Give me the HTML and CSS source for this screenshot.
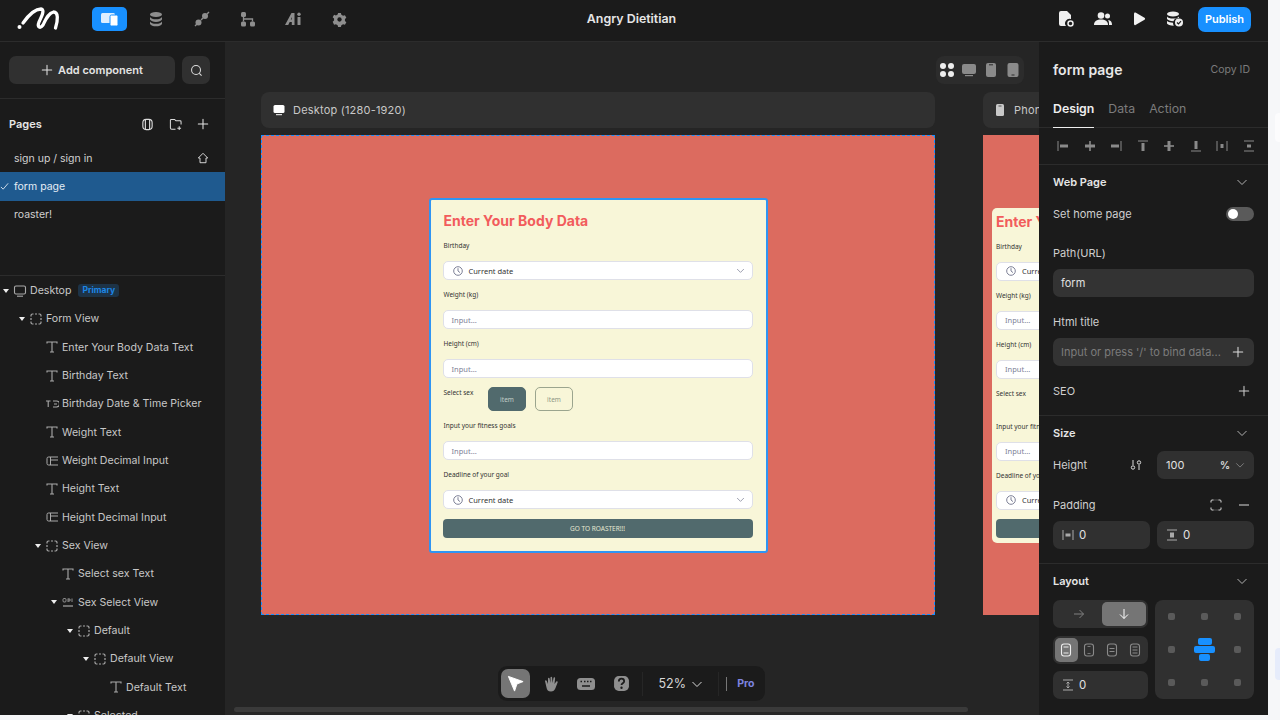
FILE: index.html
```html
<!DOCTYPE html>
<html lang="en">
<head>
  <meta charset="UTF-8" />
  <title>Angry Dietitian</title>
  <link rel="stylesheet" href="styles.css">
</head>
<body>
  <svg class="sprite" aria-hidden="true">
    <symbol id="i-text" viewBox="0 0 14 14"><path d="M2 3.5V2h10v1.5M7 2v10M5 12h4" fill="none" stroke="currentColor" stroke-width="1.1"/></symbol>
    <symbol id="i-view" viewBox="0 0 14 14"><path d="M2 4.500V3.500A1.500 1.500 0 0 1 3.500 2h1M6 2h2M9.500 2h1A1.500 1.500 0 0 1 12 3.500v1M12 6v2M12 9.500v1a1.500 1.500 0 0 1-1.500 1.500h-1M8 12H6M4.500 12h-1A1.500 1.500 0 0 1 2 10.500v-1M2 8V6" fill="none" stroke="currentColor" stroke-width="1.200"/></symbol>
    <symbol id="i-input" viewBox="0 0 14 14"><path d="M13 3H3.5A1.5 1.5 0 0 0 2 4.500v5A1.500 1.500 0 0 0 3.500 11H13M5.500 3v8M5.500 6H13" fill="none" stroke="currentColor" stroke-width="1"/></symbol>
    <symbol id="i-picker" viewBox="0 0 14 14"><path d="M1 4h4.500M3.200 4v6M8 4h3.500a2.500 2.500 0 0 1 0 6H8M9 7h3" fill="none" stroke="currentColor" stroke-width="1.1"/></symbol>
    <symbol id="i-select" viewBox="0 0 14 14"><path d="M2 11h10" fill="none" stroke="currentColor" stroke-width="1.200"/><rect x="2" y="3.500" width="3" height="3.500" rx="1" fill="none" stroke="currentColor" stroke-width=".8"/><path d="M7 3.500v3.500M7 4h2v2H7M11 3.500V7" fill="none" stroke="currentColor" stroke-width=".8"/></symbol>
    <symbol id="i-monitor" viewBox="0 0 14 14"><rect x="1.500" y="2" width="11" height="8" rx="1.500" fill="none" stroke="currentColor" stroke-width="1.100"/><path d="M4 12.200h6" stroke="currentColor" stroke-width="1.100"/></symbol>
    <symbol id="i-plus" viewBox="0 0 14 14"><path d="M7 1.500v11M1.500 7h11" fill="none" stroke="currentColor" stroke-width="1.200" stroke-linecap="round"/></symbol>
    <symbol id="i-chevron" viewBox="0 0 12 12"><path d="M1.500 4l4.500 4.500L10.500 4" fill="none" stroke="currentColor" stroke-width="1"/></symbol>
    <symbol id="i-clock" viewBox="0 0 12 12"><circle cx="6" cy="6" r="4.300" fill="none" stroke="currentColor" stroke-width="1"/><path d="M6 3.200V6l2 1.600" fill="none" stroke="currentColor" stroke-width="1"/></symbol>
    <symbol id="i-phone" viewBox="0 0 14 14"><rect x="3" y="1" width="8" height="12" rx="1.500" fill="currentColor"/><path d="M5.500 3h3" stroke="#303030" stroke-width=".8"/></symbol>
    <symbol id="i-wrap-a" viewBox="0 0 14 14"><rect x="2.500" y="1" width="9" height="12" rx="2.500" fill="none" stroke="currentColor" stroke-width="1.100"/><path d="M4.500 4h5M4.500 10h5" stroke="currentColor" stroke-width="1"/></symbol>
    <symbol id="i-wrap-b" viewBox="0 0 14 14"><rect x="2.500" y="1" width="9" height="12" rx="2.500" fill="none" stroke="currentColor" stroke-width="1.100"/><path d="M5.500 3.500h3M5.500 10.500h3" stroke="currentColor" stroke-width=".8"/></symbol>
    <symbol id="i-wrap-c" viewBox="0 0 14 14"><rect x="2.500" y="1" width="9" height="12" rx="2.500" fill="none" stroke="currentColor" stroke-width="1.100"/><path d="M4.500 5.500h5M4.500 8.500h5" stroke="currentColor" stroke-width="1"/></symbol>
    <symbol id="i-wrap-d" viewBox="0 0 14 14"><rect x="2.500" y="1" width="9" height="12" rx="2.500" fill="none" stroke="currentColor" stroke-width="1.100"/><path d="M4.500 4h5M4.500 7h5M4.500 10h5" stroke="currentColor" stroke-width="1"/></symbol>
  </svg>

  <div class="app">
    <header class="topbar">
      <div class="topbar-left">
        <svg class="logo" viewBox="0 0 44 24" width="44" height="24"><circle cx="3.500" cy="20" r="2" fill="#fff"/><path d="M7 16C12 9 18 2 25 2c4 .5 1 7-2 13-2 5 1 7 4 3 3-6 5.500-12 10.500-13 5 0 4.500 8 2 16" fill="none" stroke="#fff" stroke-width="3.300" stroke-linecap="round"/></svg>
        <nav class="main-nav">
          <a class="nav-btn active" href="#"><svg viewBox="0 0 20 16" width="20" height="16"><rect x="1" y="2" width="14" height="10" rx="1.500" fill="#fff" opacity=".85"/><rect x="10" y="4" width="8" height="11" rx="1.500" fill="#fff" stroke="#1890ff"/></svg></a>
          <a class="nav-btn" href="#"><svg viewBox="0 0 16 16" width="16" height="16" fill="currentColor"><ellipse cx="8" cy="3.500" rx="6" ry="2.500"/><path d="M2 6c1 1.500 3 2.300 6 2.300S13 7.500 14 6v2.500C13 10 11 11 8 11S3 10 2 8.500zM2 10.500c1 1.500 3 2.300 6 2.300s5-.8 6-2.300V13c-1 1.500-3 2.300-6 2.300S3 14.500 2 13z"/></svg></a>
          <a class="nav-btn" href="#"><svg viewBox="0 0 16 16" width="16" height="16" fill="currentColor"><circle cx="4.500" cy="11.500" r="3"/><circle cx="11" cy="5" r="3"/><path d="M1 15l2-2M13 3l2-2M7 9l2-2" stroke="currentColor" stroke-width="1.400"/></svg></a>
          <a class="nav-btn" href="#"><svg viewBox="0 0 16 16" width="16" height="16" fill="currentColor"><rect x="1" y="1" width="5" height="5" rx="1.500"/><rect x="1" y="10.500" width="5" height="5" rx="1.500"/><rect x="10" y="10.500" width="5" height="5" rx="1.500"/><path d="M3.500 6v4.500M3.500 8h9v2.500" fill="none" stroke="currentColor" stroke-width="1.300"/></svg></a>
          <a class="nav-btn" href="#"><svg viewBox="0 0 18 16" width="18" height="16" fill="currentColor"><path d="M0 14L6.500 2h3v12H6.800v-3H4.700L3.200 14zM6.800 6L5.800 8.500h1z"/><rect x="12.500" y="6" width="3" height="8" rx=".5"/><circle cx="14" cy="3.200" r="1.700"/></svg></a>
          <a class="nav-btn" href="#"><svg viewBox="0 0 16 16" width="15" height="15"><path d="M6.500 1h3l.5 2 1.800 1 2-.6 1.500 2.600-1.500 1.500v2l1.500 1.500-1.500 2.600-2-.6-1.800 1-.5 2h-3l-.5-2-1.800-1-2 .6L.7 10.500 2.200 9V7L.7 5.500 2.200 3l2 .6 1.800-1z" fill="currentColor"/><circle cx="8" cy="8" r="2.300" fill="#1b1b1b"/></svg></a>
        </nav>
      </div>
      <div class="app-title">Angry Dietitian</div>
      <div class="topbar-right">
        <svg viewBox="0 0 16 18" width="16" height="18"><path d="M1 3a2 2 0 0 1 2-2h6l4 4v4a4.500 4.500 0 0 0-5 7H3a2 2 0 0 1-2-2z" fill="#eee"/><circle cx="12.500" cy="13.500" r="2.500" fill="none" stroke="#eee" stroke-width="1.500"/></svg>
        <svg viewBox="0 0 18 16" width="18" height="16" fill="#eee"><circle cx="7" cy="4.500" r="3.300"/><path d="M0 14c0-4 3-5.500 7-5.500s7 1.500 7 5.500z"/><circle cx="13.500" cy="5" r="2.500"/><path d="M15 14h3c0-3-1-4.500-4-5 1 1 1 3 1 5z"/></svg>
        <svg viewBox="0 0 14 14" width="14" height="14"><path d="M2 1.500c0-1 .8-1.300 1.500-.9l9 5.200c.8.500.8 1.500 0 2l-9 5.200c-.7.400-1.500.1-1.500-.9z" fill="#f2f2f2"/></svg>
        <svg viewBox="0 0 18 16" width="18" height="16" fill="#eee"><ellipse cx="7" cy="3" rx="6" ry="2.500"/><path d="M1 5.500C2 7 4 7.500 7 7.500s5-.5 6-2V7c-3 0-5 1-5.500 3.300C4 10.300 2 9 1 8zM1 10c1.500 1 3.500 1.500 6 1.700 0 1 .2 2 .8 3C4 14.700 1.500 13.500 1 12.500z"/><circle cx="13" cy="11.500" r="4"/><path d="M11 11.500l1.500 1.500 2.500-2.800" fill="none" stroke="#1b1b1b" stroke-width="1.200"/></svg>
        <button class="publish">Publish</button>
      </div>
    </header>

    <div class="workspace">
      <aside class="sidebar">
        <div class="add-row">
          <button class="add-btn"><svg class="icon-12"><use href="#i-plus"/></svg>Add component</button>
          <button class="search-btn"><svg viewBox="0 0 14 14" width="13" height="13"><circle cx="6.500" cy="6.500" r="4.800" fill="none" stroke="currentColor" stroke-width="1.100"/><path d="M10 10l2.500 2.500" stroke="currentColor" stroke-width="1.100"/></svg></button>
        </div>

        <section class="pages">
          <div class="pages-head">
            <span>Pages</span>
            <div class="pages-tools">
              <svg viewBox="0 0 14 14" width="13" height="13"><rect x="2" y="1.500" width="10" height="11" rx="3.500" fill="none" stroke="#ddd" stroke-width="1.200"/><path d="M4.700 2v10M9.300 2v10" stroke="#ddd" stroke-width="1.200"/></svg>
              <svg viewBox="0 0 14 14" width="13" height="13"><path d="M7 12H3a1.500 1.500 0 0 1-1.500-1.500v-8A1 1 0 0 1 2.500 1.500H6L7.500 3H12a1 1 0 0 1 1 1v3" fill="none" stroke="#ddd" stroke-width="1.100"/><path d="M11 9v4M9 11h4" stroke="#ddd" stroke-width="1.100"/></svg>
              <svg class="icon-12"><use href="#i-plus"/></svg>
            </div>
          </div>
          <div class="page-row"><span>sign up / sign in</span><svg viewBox="0 0 14 14" width="12" height="12"><path d="M7 1.500L1.500 7H3.500v5.500h7V7h2z" fill="none" stroke="#ddd" stroke-width="1.100" stroke-linejoin="round"/></svg></div>
          <div class="page-row selected"><svg class="check" viewBox="0 0 10 10" width="9" height="9"><path d="M1 5.500L3.500 8 9 1.500" fill="none" stroke="#dfe8f2" stroke-width="1"/></svg><span>form page</span></div>
          <div class="page-row"><span>roaster!</span></div>
        </section>

        <section class="tree">
          <div class="tree-row lvl-0"><i class="caret"></i><svg class="tree-icon"><use href="#i-monitor"/></svg><span>Desktop</span><em class="tag">Primary</em></div>
          <div class="tree-row lvl-1"><i class="caret"></i><svg class="tree-icon"><use href="#i-view"/></svg><span>Form View</span></div>
          <div class="tree-row lvl-2"><i class="no-caret"></i><svg class="tree-icon"><use href="#i-text"/></svg><span>Enter Your Body Data Text</span></div>
          <div class="tree-row lvl-2"><i class="no-caret"></i><svg class="tree-icon"><use href="#i-text"/></svg><span>Birthday Text</span></div>
          <div class="tree-row lvl-2"><i class="no-caret"></i><svg class="tree-icon"><use href="#i-picker"/></svg><span>Birthday Date &amp; Time Picker</span></div>
          <div class="tree-row lvl-2"><i class="no-caret"></i><svg class="tree-icon"><use href="#i-text"/></svg><span>Weight Text</span></div>
          <div class="tree-row lvl-2"><i class="no-caret"></i><svg class="tree-icon"><use href="#i-input"/></svg><span>Weight Decimal Input</span></div>
          <div class="tree-row lvl-2"><i class="no-caret"></i><svg class="tree-icon"><use href="#i-text"/></svg><span>Height Text</span></div>
          <div class="tree-row lvl-2"><i class="no-caret"></i><svg class="tree-icon"><use href="#i-input"/></svg><span>Height Decimal Input</span></div>
          <div class="tree-row lvl-2"><i class="caret"></i><svg class="tree-icon"><use href="#i-view"/></svg><span>Sex View</span></div>
          <div class="tree-row lvl-3"><i class="no-caret"></i><svg class="tree-icon"><use href="#i-text"/></svg><span>Select sex Text</span></div>
          <div class="tree-row lvl-3"><i class="caret"></i><svg class="tree-icon"><use href="#i-select"/></svg><span>Sex Select View</span></div>
          <div class="tree-row lvl-4"><i class="caret"></i><svg class="tree-icon"><use href="#i-view"/></svg><span>Default</span></div>
          <div class="tree-row lvl-5"><i class="caret"></i><svg class="tree-icon"><use href="#i-view"/></svg><span>Default View</span></div>
          <div class="tree-row lvl-6"><i class="no-caret"></i><svg class="tree-icon"><use href="#i-text"/></svg><span>Default Text</span></div>
          <div class="tree-row lvl-4"><i class="caret"></i><svg class="tree-icon"><use href="#i-view"/></svg><span>Selected</span></div>
        </section>
      </aside>

      <main class="canvas">
        <div class="device-switch">
          <svg viewBox="0 0 16 16" width="16" height="16" fill="#eee"><circle cx="4" cy="4" r="3"/><circle cx="12" cy="4" r="3"/><circle cx="4" cy="12" r="3"/><circle cx="12" cy="12" r="3"/></svg>
          <svg viewBox="0 0 16 16" width="16" height="16" fill="#8a8a8a"><rect x="1" y="2" width="14" height="10" rx="2"/><rect x="4" y="13" width="8" height="1.200"/></svg>
          <svg viewBox="0 0 16 16" width="16" height="16" fill="#8a8a8a"><rect x="3" y="1" width="10" height="14" rx="2"/><rect x="6" y="2.300" width="4" height="1" fill="#2c2c2c"/></svg>
          <svg viewBox="0 0 16 16" width="16" height="16" fill="#8a8a8a"><rect x="2.500" y="1" width="11" height="14" rx="2"/><rect x="6.500" y="12.500" width="3" height="1" fill="#2c2c2c"/></svg>
        </div>

        <div class="device-bar desktop-bar"><svg viewBox="0 0 14 14" width="14" height="14"><rect x="1.500" y="2" width="11" height="8" rx="1.500" fill="#fff"/><path d="M4 11.700h6" stroke="#fff"/></svg><span>Desktop (1280-1920)</span></div>
        <div class="device-bar phone-bar"><svg class="icon-14"><use href="#i-phone"/></svg><span>Phone</span></div>

        <div class="frame desktop-frame">
          <form class="body-form">
            <h2>Enter Your Body Data</h2>
            <label>Birthday</label>
            <div class="field picker"><svg class="icon-12"><use href="#i-clock"/></svg><span>Current date</span><svg class="push"><use href="#i-chevron"/></svg></div>
            <label>Weight (kg)</label>
            <div class="field">Input...</div>
            <label>Height (cm)</label>
            <div class="field">Input...</div>
            <div class="sex-row">
              <span>Select sex</span>
              <button type="button" class="sex-item on">item</button>
              <button type="button" class="sex-item">item</button>
            </div>
            <label>Input your fitness goals</label>
            <div class="field">Input...</div>
            <label>Deadline of your goal</label>
            <div class="field picker"><svg class="icon-12"><use href="#i-clock"/></svg><span>Current date</span><svg class="push"><use href="#i-chevron"/></svg></div>
            <button type="button" class="go-btn">GO TO ROASTER!!!</button>
          </form>
        </div>

        <div class="frame phone-frame">
          <form class="body-form phone-form">
            <h2>Enter Your Body Data</h2>
            <label>Birthday</label>
            <div class="field picker"><svg class="icon-12"><use href="#i-clock"/></svg><span>Current date</span><svg class="push"><use href="#i-chevron"/></svg></div>
            <label>Weight (kg)</label>
            <div class="field">Input...</div>
            <label>Height (cm)</label>
            <div class="field">Input...</div>
            <div class="sex-row"><span>Select sex</span></div>
            <label>Input your fitness goals</label>
            <div class="field">Input...</div>
            <label>Deadline of your goal</label>
            <div class="field picker"><svg class="icon-12"><use href="#i-clock"/></svg><span>Current date</span><svg class="push"><use href="#i-chevron"/></svg></div>
            <button type="button" class="go-btn">GO TO ROASTER!!!</button>
          </form>
        </div>

        <div class="toolbar">
          <button class="tool active"><svg viewBox="0 0 20 20" width="19" height="19"><path d="M2.500 2.500L18 8l-6.500 2.500L9 18z" fill="#fff" stroke="#fff" stroke-linejoin="round"/></svg></button>
          <button class="tool"><svg viewBox="0 0 18 18" width="18" height="18" fill="#8f8f8f"><path d="M3 6c0-1 1.500-1 1.800 0L6 9V3.500c0-1 1.500-1 1.600 0L8.500 8V2.500c0-1 1.600-1 1.600 0L10.500 8l1-5c.2-1 1.700-.8 1.600.3L12.500 9l1.800-2.500c.6-.8 1.800 0 1.300 1L13.500 13c-.8 2.500-2.500 3.500-4.500 3.500-3 0-4-1.500-4.500-4z"/></svg></button>
          <button class="tool"><svg viewBox="0 0 20 14" width="20" height="14"><rect x="1" y="1" width="18" height="12" rx="3.500" fill="#8f8f8f"/><path d="M4.500 4.500h1.500M8 4.500h1.500M11 4.500h1.500M14 4.500h1.500M6 9h8" stroke="#1b1b1b" stroke-width="1.300"/></svg></button>
          <button class="tool"><svg viewBox="0 0 16 16" width="17" height="17"><rect x="1" y="1" width="14" height="14" rx="4.500" fill="#8f8f8f"/><path d="M5.500 6c0-3.500 5-3.300 5-.2 0 2-2.500 2-2.500 3.700" fill="none" stroke="#1b1b1b" stroke-width="1.700"/><circle cx="8" cy="12" r="1.100" fill="#1b1b1b"/></svg></button>
          <i class="tool-sep"></i>
          <div class="zoom-val">52%<svg class="icon-12"><use href="#i-chevron"/></svg></div>
          <i class="tool-sep"></i>
          <i class="pro-bar"></i>
          <span class="pro">Pro</span>
        </div>

        <div class="h-scroll"></div>
      </main>

      <aside class="panel">
        <div class="panel-title"><h3>form page</h3><span>Copy ID</span></div>
        <div class="tabs"><span class="on">Design</span><span>Data</span><span>Action</span></div>
        <div class="align-row">
          <svg viewBox="0 0 12 12"><path d="M1 1v10" stroke-width="1"/><path d="M3 4.500h8v3H3z" class="solid"/></svg>
          <svg viewBox="0 0 12 12"><path d="M6 1v10" stroke-width="1.600"/><path d="M1 4.500h10v3H1z" class="solid"/></svg>
          <svg viewBox="0 0 12 12"><path d="M11 1v10" stroke-width="1"/><path d="M1 4.500h8v3H1z" class="solid"/></svg>
          <svg viewBox="0 0 12 12"><path d="M1 1h10" stroke-width="1"/><path d="M4.500 3h3v8h-3z" class="solid"/></svg>
          <svg viewBox="0 0 12 12"><path d="M1 6h10" stroke-width="1.600"/><path d="M4.500 1h3v10h-3z" class="solid"/></svg>
          <svg viewBox="0 0 12 12"><path d="M1 11h10" stroke-width="1"/><path d="M4.500 1h3v8h-3z" class="solid"/></svg>
          <svg viewBox="0 0 12 12"><path d="M1 1v10M11 1v10" stroke-width="1"/><path d="M4.500 4h3v4h-3z" class="solid"/></svg>
          <svg viewBox="0 0 12 12"><path d="M1 1h10M1 11h10" stroke-width="1"/><path d="M4 4.500h4v3H4z" class="solid"/></svg>
        </div>

        <section class="panel-sec web-sec">
          <div class="sec-head"><b>Web Page</b><svg class="icon-12"><use href="#i-chevron"/></svg></div>
          <div class="prop-row"><span>Set home page</span><i class="toggle"></i></div>
          <div class="prop-label">Path(URL)</div>
          <div class="prop-input">form</div>
          <div class="prop-label">Html title</div>
          <div class="prop-input placeholder"><span>Input or press '/' to bind data...</span><svg class="icon-12"><use href="#i-plus"/></svg></div>
          <div class="prop-row seo-row"><span>SEO</span><svg class="icon-12"><use href="#i-plus"/></svg></div>
        </section>

        <section class="panel-sec size-sec">
          <div class="sec-head"><b>Size</b><svg class="icon-12"><use href="#i-chevron"/></svg></div>
          <div class="height-row">
            <span>Height</span>
            <svg class="sliders" viewBox="0 0 12 12" width="12" height="12"><path d="M3 1v5M9 6v5" stroke="#ddd"/><circle cx="3" cy="8.500" r="1.700" fill="none" stroke="#ddd"/><circle cx="9" cy="3.500" r="1.700" fill="none" stroke="#ddd"/></svg>
            <div class="unit-input"><span>100</span><b>%</b><svg class="icon-12"><use href="#i-chevron"/></svg></div>
          </div>
          <div class="prop-row padding-row"><span>Padding</span>
            <div class="padding-tools">
              <svg viewBox="0 0 12 12" width="12" height="12"><path d="M1 3.500V2a1 1 0 0 1 1-1h1.500M8.500 1H10a1 1 0 0 1 1 1v1.500M11 8.500V10a1 1 0 0 1-1 1H8.500M3.500 11H2a1 1 0 0 1-1-1V8.500" fill="none" stroke="#ddd"/><path d="M2.500 1h7M2.500 11h7" stroke="#777" stroke-width=".6"/></svg>
              <svg class="icon-12"><path d="M1 6h10" stroke="#bbb" stroke-width="1.200"/></svg>
            </div>
          </div>
          <div class="two-inputs">
            <div class="num-input"><svg viewBox="0 0 12 12" width="12" height="12"><path d="M1 1v10M11 1v10" stroke="#aaa"/><path d="M3.500 4.500h5v3h-5z" fill="#aaa"/></svg>0</div>
            <div class="num-input"><svg viewBox="0 0 12 12" width="12" height="12"><path d="M1 1h10M1 11h10" stroke="#aaa"/><path d="M4 3.500h4v5H4z" fill="#aaa"/></svg>0</div>
          </div>
        </section>

        <section class="panel-sec layout-sec">
          <div class="sec-head"><b>Layout</b><svg class="icon-12"><use href="#i-chevron"/></svg></div>
          <div class="layout-grid">
            <div class="layout-left">
              <div class="seg dir-seg">
                <span><svg viewBox="0 0 12 12" width="12" height="12"><path d="M1 6h9.500M6.500 2l4 4-4 4" fill="none" stroke="#808080"/></svg></span>
                <span class="on"><svg viewBox="0 0 12 12" width="12" height="12"><path d="M6 1v9.500M2 6.500l4 4 4-4" fill="none" stroke="#fff"/></svg></span>
              </div>
              <div class="seg wrap-seg">
                <span class="on"><svg class="icon-14"><use href="#i-wrap-a"/></svg></span>
                <span><svg class="icon-14"><use href="#i-wrap-b"/></svg></span>
                <span><svg class="icon-14"><use href="#i-wrap-c"/></svg></span>
                <span><svg class="icon-14"><use href="#i-wrap-d"/></svg></span>
              </div>
              <div class="num-input"><svg viewBox="0 0 12 12" width="12" height="12"><path d="M1 1h10M1 11h10M6 3v6M4.500 4.500L6 3l1.500 1.500M4.500 7.500L6 9l1.500-1.500" fill="none" stroke="#aaa"/></svg>0</div>
            </div>
            <div class="align-pad">
              <i></i><i></i><i></i>
              <i></i><div class="align-bars"><u class="b1"></u><u class="b2"></u><u class="b3"></u></div><i></i>
              <i></i><i></i><i></i>
            </div>
          </div>
        </section>
      </aside>
    </div>
  </div>

  <div class="edge-blob top-blob"></div>
  <div class="edge-blob low-blob"></div>
</body>
</html>
```

FILE: styles.css
```css
* {
  box-sizing: border-box;
}
body {
  margin: 0;
  background: #f6f7f9;
  font-family: Inter, "Liberation Sans", sans-serif;
  overflow: hidden;
}
.sprite {
  display: none;
}
svg {
  display: block;
  flex: none;
}
.icon-12 {
  width: 12px;
  height: 12px;
}
.icon-14 {
  width: 14px;
  height: 14px;
}
button {
  font-family: inherit;
  border: none;
  padding: 0;
}

.app {
  width: 1268px;
  height: 715px;
  background: #1b1b1b;
  color: #ddd;
  display: flex;
  flex-direction: column;
  overflow: hidden;
}

/* top bar */
.topbar {
  height: 42px;
  flex: none;
  position: relative;
  display: flex;
  align-items: center;
  justify-content: space-between;
  padding: 0 17px 3px 16px;
  border-bottom: 1px solid #2c2c2c;
}
.topbar-left {
  display: flex;
  align-items: center;
}
.main-nav {
  display: flex;
  align-items: center;
  gap: 11px;
  margin-left: 32px;
}
.nav-btn {
  width: 35px;
  height: 24px;
  border-radius: 5px;
  color: #8e8e8e;
  display: flex;
  align-items: center;
  justify-content: center;
}
.nav-btn.active {
  background: #1890ff;
}
.app-title {
  position: absolute;
  left: 0;
  right: 5px;
  top: 11px;
  text-align: center;
  font-size: 12.400px;
  font-weight: 600;
  color: #e6e6e6;
  pointer-events: none;
}
.topbar-right {
  display: flex;
  align-items: center;
  gap: 20px;
}
.publish {
  width: 53px;
  height: 25px;
  border-radius: 7px;
  background: #1890ff;
  color: #fff;
  font-size: 11px;
  font-weight: 600;
  margin-left: -6px;
}

.workspace {
  flex: 1;
  display: flex;
  min-height: 0;
}

/* left side */
.sidebar {
  width: 225px;
  flex: none;
  display: flex;
  flex-direction: column;
  overflow: hidden;
}
.add-row {
  height: 57px;
  flex: none;
  display: flex;
  gap: 7px;
  padding: 14px 15px 0 9px;
  border-bottom: 1px solid #2c2c2c;
}
.add-btn {
  width: 166px;
  height: 28px;
  border-radius: 7px;
  background: #303030;
  color: #e4e4e4;
  font-size: 11px;
  font-weight: 600;
  display: flex;
  align-items: center;
  justify-content: center;
  gap: 5px;
}
.search-btn {
  width: 28px;
  height: 28px;
  border-radius: 7px;
  background: #303030;
  color: #ddd;
  display: flex;
  align-items: center;
  justify-content: center;
}
.pages {
  height: 177px;
  flex: none;
  padding-top: 11px;
  border-bottom: 1px solid #2c2c2c;
}
.pages-head {
  height: 28px;
  margin-bottom: 6px;
  padding: 0 16px 0 9px;
  display: flex;
  align-items: center;
  justify-content: space-between;
  font-size: 11px;
  font-weight: 600;
  color: #e6e6e6;
}
.pages-tools {
  display: flex;
  align-items: center;
  gap: 15px;
}
.page-row {
  height: 28.330px;
  padding: 0 16px 0 14px;
  display: flex;
  align-items: center;
  justify-content: space-between;
  position: relative;
  font-size: 10.500px;
  color: #d0d0d0;
}
.page-row.selected {
  background: #1f5a8f;
  color: #e4edf5;
}
.check {
  position: absolute;
  left: 0;
  top: 10px;
}
.tree {
  flex: 1;
  overflow: hidden;
  padding-top: .500px;
}
.tree-row {
  height: 28.330px;
  display: flex;
  align-items: center;
  font-size: 10.600px;
  color: #c8c8c8;
  white-space: nowrap;
}
.lvl-0 { padding-left: 1px; }
.lvl-1 { padding-left: 17px; }
.lvl-2 { padding-left: 33px; }
.lvl-3 { padding-left: 49px; }
.lvl-4 { padding-left: 65px; }
.lvl-5 { padding-left: 81px; }
.lvl-6 { padding-left: 97px; }
.caret,
.no-caret {
  width: 10px;
  flex: none;
  display: flex;
  justify-content: center;
}
.caret::before {
  content: "";
  border-left: 3px solid transparent;
  border-right: 3px solid transparent;
  border-top: 4px solid #eee;
}
.tree-icon {
  width: 14px;
  height: 14px;
  margin: 0 3px 0 2px;
  color: #aaa;
}
.tag {
  margin-left: 7px;
  padding: 0 4px;
  height: 13px;
  line-height: 13px;
  border-radius: 3px;
  background: #1d3347;
  color: #1c86e6;
  font-size: 8.500px;
  font-style: normal;
  font-weight: 700;
}

/* canvas */
.canvas {
  width: 814px;
  flex: none;
  position: relative;
  background: #252525;
  overflow: hidden;
}
.device-switch {
  position: absolute;
  left: 711px;
  top: 14px;
  width: 88px;
  height: 28px;
  border-radius: 8px;
  background: #2c2c2c;
  display: flex;
  align-items: center;
  justify-content: center;
  gap: 6px;
}
.device-bar {
  position: absolute;
  top: 50px;
  height: 36px;
  border-radius: 8px;
  background: #303030;
  display: flex;
  align-items: center;
  gap: 7px;
  padding-left: 11px;
  font-size: 11px;
  color: #c8c8c8;
  letter-spacing: .2px;
}
.desktop-bar {
  left: 36px;
  width: 674px;
}
.phone-bar {
  left: 758px;
  width: 200px;
  color: #c8c8c8;
  padding-left: 10px;
}
.frame {
  position: absolute;
  top: 93px;
  height: 480px;
  background: #dc6b5f;
  display: flex;
  align-items: center;
}
.desktop-frame {
  left: 36px;
  width: 674px;
  justify-content: center;
  border: 1px dashed #1890ff;
}
.phone-frame {
  left: 758px;
  width: 200px;
  padding-left: 9px;
}

.body-form {
  width: 339px;
  height: 355px;
  flex: none;
  padding: 11.500px 13px 14px 12px;
  background: #f8f6d8;
  border: 2px solid #2f95f3;
  border-radius: 3px;
  color: #333;
  display: flex;
  flex-direction: column;
}
.phone-form {
  width: 180px;
  height: 335px;
  padding: 4px 0 5px 4px;
  border: none;
  border-radius: 5px;
}
.body-form h2 {
  margin: 0;
  height: 20px;
  line-height: 20px;
  font-size: 14px;
  font-weight: 700;
  color: #f25c5c;
  white-space: nowrap;
}
.body-form label,
.sex-row span {
  font-family: "Noto Sans", sans-serif;
  font-size: 6.500px;
  color: #333;
}
.body-form label {
  height: 30px;
  line-height: 30px;
  flex: none;
}
.desktop-frame h2,
.desktop-frame label,
.desktop-frame .sex-row span {
  margin-left: 1px;
}
.field {
  height: 19px;
  flex: none;
  padding-left: 8px;
  background: #fff;
  border: 1px solid #dfe0e8;
  border-radius: 5px;
  display: flex;
  align-items: center;
  gap: 5px;
  font-family: "Noto Sans", sans-serif;
  font-size: 7.500px;
  color: #7d8096;
  white-space: nowrap;
}
.picker {
  color: #333;
  padding-right: 7px;
}
.picker svg {
  color: #7d8096;
}
.push {
  width: 9px;
  height: 9px;
  margin-left: auto;
}
.sex-row {
  height: 24px;
  margin-top: 9px;
  flex: none;
  display: flex;
  align-items: flex-start;
  line-height: 12px;
}
.sex-row span {
  width: 44.500px;
}
.sex-item {
  width: 38px;
  height: 24px;
  margin-right: 9px;
  border-radius: 5px;
  border: 1px solid #9ba58e;
  background: transparent;
  color: #8d9785;
  font-family: "Noto Sans", sans-serif;
  font-size: 6.500px;
}
.sex-item.on {
  background: #516a6d;
  border-color: #516a6d;
  color: #c3cfc8;
}
.go-btn {
  height: 19px;
  margin-top: 9.500px;
  flex: none;
  border-radius: 4px;
  background: #516a6d;
  color: #e6e8d2;
  font-family: "Noto Sans", sans-serif;
  font-size: 6.500px;
}

.toolbar {
  position: absolute;
  left: 273px;
  top: 624px;
  width: 267px;
  height: 35px;
  border-radius: 9px;
  background: #1b1b1b;
  display: flex;
  align-items: center;
  padding-left: 3px;
}
.tool {
  width: 29px;
  height: 29px;
  margin-right: 6.300px;
  border-radius: 7px;
  background: transparent;
  display: flex;
  align-items: center;
  justify-content: center;
}
.tool.active {
  background: #757575;
}
.tool-sep {
  width: 1px;
  height: 24px;
  background: #262626;
}
.zoom-val {
  width: 75px;
  display: flex;
  align-items: center;
  justify-content: center;
  gap: 5px;
  font-size: 12.500px;
  color: #d8d8d8;
}
.pro-bar {
  width: 1px;
  height: 14px;
  margin-left: 7px;
  background: #777;
}
.pro {
  margin-left: 10px;
  font-size: 10.500px;
  font-weight: 700;
  color: #7e84e0;
}
.h-scroll {
  position: absolute;
  left: 9px;
  top: 665px;
  width: 734px;
  height: 5px;
  border-radius: 3px;
  background: #3a3a3a;
}

/* right panel */
.panel {
  width: 229px;
  flex: none;
  overflow: hidden;
  font-size: 11px;
  color: #cfcfcf;
}
.panel-title {
  height: 58px;
  padding: 0 18px 3px 14px;
  display: flex;
  align-items: center;
  justify-content: space-between;
}
.panel-title h3 {
  margin: 0;
  font-size: 14px;
  font-weight: 600;
  color: #e8e8e8;
}
.panel-title span {
  font-size: 10.500px;
  color: #7c7c7c;
}
.tabs {
  height: 28px;
  padding: 0 14px;
  display: flex;
  gap: 14px;
  border-bottom: 1px solid #2c2c2c;
  font-size: 12.300px;
  color: #7c7c7c;
}
.tabs span {
  height: 28px;
  line-height: 17px;
}
.tabs .on {
  color: #eee;
  font-weight: 600;
  border-bottom: 1px solid #eee;
}
.align-row {
  height: 37px;
  padding: 0 13px 0 18px;
  display: flex;
  align-items: center;
  justify-content: space-between;
  border-bottom: 1px solid #2c2c2c;
}
.align-row svg {
  width: 12px;
  height: 12px;
  stroke: #8a8a8a;
  fill: none;
}
.align-row .solid {
  fill: #8a8a8a;
  stroke: none;
}
.panel-sec {
  padding: 0 14px;
  border-bottom: 1px solid #2c2c2c;
}
.layout-sec {
  border-bottom: none;
}
.sec-head {
  height: 35px;
  padding: 0 6px 1px 0;
  display: flex;
  align-items: center;
  justify-content: space-between;
  font-size: 11px;
  color: #e6e6e6;
}
.sec-head b {
  font-weight: 600;
}
.sec-head svg {
  color: #b0b0b0;
}
.prop-row {
  height: 28px;
  display: flex;
  align-items: center;
  justify-content: space-between;
}
.toggle {
  width: 28px;
  height: 14px;
  border-radius: 7px;
  background: #5a5a5a;
  position: relative;
}
.toggle::before {
  content: "";
  position: absolute;
  left: 2px;
  top: 2px;
  width: 10px;
  height: 10px;
  border-radius: 50%;
  background: #fff;
}
.prop-label {
  height: 20px;
  line-height: 20px;
  margin: 15px 0 6px;
}
.prop-input {
  height: 28px;
  border-radius: 7px;
  background: #333;
  padding: 0 10px 0 8px;
  display: flex;
  align-items: center;
  justify-content: space-between;
  color: #e0e0e0;
}
.placeholder span {
  color: #7c7c7c;
}
.placeholder svg {
  color: #ddd;
}
.seo-row {
  margin-top: 11px;
  margin-bottom: 10px;
  padding-right: 4px;
}
.size-sec {
  padding-bottom: 14px;
}
.height-row {
  margin-top: 0;
  height: 28px;
  display: flex;
  align-items: center;
}
.sliders {
  margin-left: 47px;
  margin-right: 15px;
}
.height-row > span {
  width: 30px;
}
.unit-input {
  width: 97px;
  height: 28px;
  border-radius: 7px;
  background: #303030;
  padding: 0 9px;
  display: flex;
  align-items: center;
  color: #e0e0e0;
}
.unit-input b {
  margin-left: auto;
  margin-right: 5px;
  font-weight: 600;
  font-size: 10px;
}
.unit-input svg {
  width: 10px;
  height: 10px;
  color: #888;
}
.padding-row {
  margin-top: 12px;
  margin-bottom: 2px;
}
.padding-tools {
  display: flex;
  gap: 16px;
  padding-right: 4px;
}
.two-inputs {
  display: flex;
  gap: 7px;
}
.num-input {
  flex: 1;
  height: 28px;
  border-radius: 7px;
  background: #303030;
  padding: 0 9px;
  display: flex;
  align-items: center;
  gap: 5px;
  color: #e0e0e0;
  font-size: 11.500px;
}
.layout-grid {
  display: flex;
  gap: 7px;
  margin-top: 1px;
}
.layout-left {
  width: 95px;
  display: flex;
  flex-direction: column;
  gap: 7.500px;
}
.seg {
  height: 28px;
  flex: none;
  padding: 2px;
  border-radius: 7px;
  background: #303030;
  display: flex;
}
.seg span {
  flex: 1;
  border-radius: 5px;
  display: flex;
  align-items: center;
  justify-content: center;
  color: #8a8a8a;
}
.seg .on {
  background: #757575;
  color: #eee;
}
.layout-left .num-input {
  flex: none;
}
.dir-seg span:first-child {
  flex: 1.070;
}
.align-pad {
  width: 99px;
  height: 99px;
  border-radius: 8px;
  background: #303030;
  display: grid;
  grid-template-columns: repeat(3, 33px);
  grid-template-rows: repeat(3, 33px);
  place-items: center;
}
.align-pad > i {
  width: 7px;
  height: 7px;
  border-radius: 2px;
  background: #5a5a5a;
}
.align-bars {
  display: flex;
  flex-direction: column;
  align-items: center;
  gap: 1px;
}
.align-bars u {
  display: block;
  height: 7px;
  border-radius: 2px;
  background: #1890ff;
}
.b1 { width: 14px; }
.b2 { width: 21px; }
.b3 { width: 11px; }

.edge-blob {
  position: absolute;
  left: 1275px;
  width: 5px;
  border-radius: 4px 0 0 4px;
}
.top-blob {
  top: 113px;
  height: 29px;
  background: #fcfcfd;
}
.low-blob {
  top: 648px;
  height: 32px;
  background: #e6ecfb;
}
```
